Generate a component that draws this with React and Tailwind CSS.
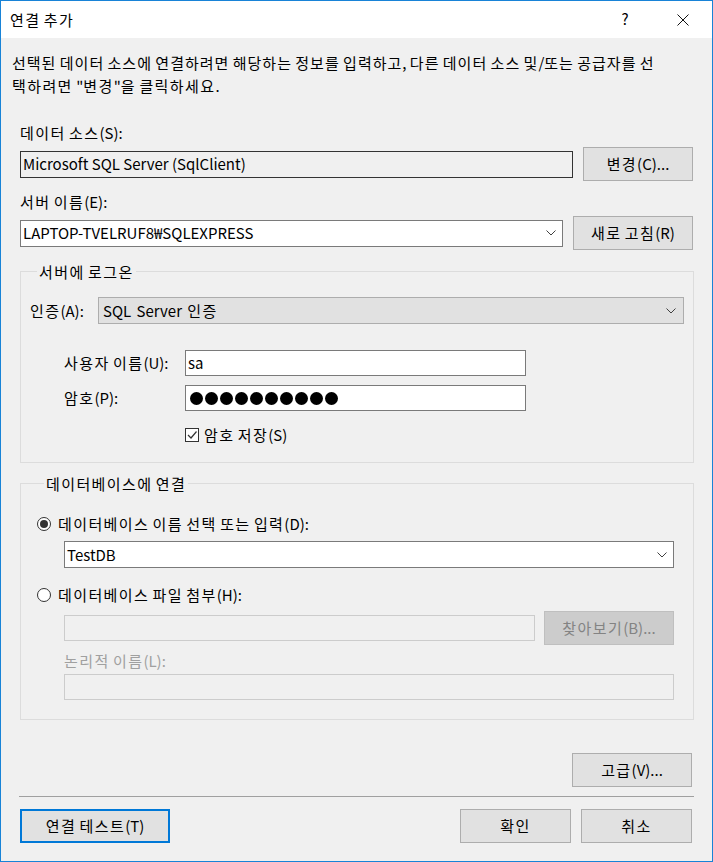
import React from "react";

// Widen Hangul runs slightly so they match the reference font's advance widths.
function T({ children, wide = "tracking-[1.4px]" }) {
  const parts = String(children).split(/([\uAC00-\uD7A3]+)/);
  return (
    <span>
      {parts.map((p, i) =>
        /[\uAC00-\uD7A3]/.test(p) ? (
          <span key={i} className={wide}>
            {p}
          </span>
        ) : (
          <React.Fragment key={i}>{p}</React.Fragment>
        )
      )}
    </span>
  );
}

function Chevron({ color = "#404040" }) {
  return (
    <svg width="10" height="6" viewBox="0 0 10 6" className="shrink-0">
      <path d="M0.5 0.5 L5 5 L9.5 0.5" fill="none" stroke={color} strokeWidth="1" />
    </svg>
  );
}

function Btn({ children, className = "" }) {
  return (
    <div
      className={`flex items-center justify-center border border-[#adadad] bg-[#e1e1e1] text-black leading-[20px] ${className}`}
    >
      <T>{children}</T>
    </div>
  );
}

function Radio({ checked }) {
  return (
    <div className="w-[14px] h-[14px] rounded-full border border-[#333333] bg-white flex items-center justify-center shrink-0">
      {checked && <div className="w-[8px] h-[8px] rounded-full bg-[#333333]" />}
    </div>
  );
}

export default function App() {
  return (
    <div className="w-[713px] h-[862px] border border-[#1883d7] bg-[#f0f0f0] font-['Noto_Sans_CJK_KR',sans-serif] text-[15px] text-black flex flex-col overflow-hidden">
      {/* Title bar */}
      <div className="h-[37px] shrink-0 bg-white flex items-center pl-[9px]">
        <span className="leading-[20px]">
          <T>연결 추가</T>
        </span>
        <div className="ml-auto flex items-center h-full">
          <div className="w-[58px] h-full flex items-center justify-center text-[15px]">?</div>
          <div className="w-[58px] h-full flex items-center justify-center">
            <svg width="12" height="12" viewBox="0 0 12 12">
              <path d="M0.5 0.5 L11.5 11.5 M11.5 0.5 L0.5 11.5" stroke="#111" strokeWidth="1" />
            </svg>
          </div>
        </div>
      </div>

      {/* Body */}
      <div className="flex flex-col px-[19px]">
        <p className="mt-[13px] -ml-[8px] leading-[23px] whitespace-nowrap">
          <T wide="tracking-[1px]">선택된 데이터 소스에 연결하려면 해당하는 정보를 입력하고, 다른 데이터 소스 및/또는 공급자를 선</T>
          <br />
          <T>택하려면 "변경"을 클릭하세요.</T>
        </p>

        <div className="mt-[24px] h-[23px] leading-[23px]">
          <T>데이터 소스(S):</T>
        </div>
        <div className="mt-[3px] h-[34px] flex items-center gap-[10px]">
          <div className="w-[553px] h-[27px] border border-[#333333] bg-[#f0f0f0] flex items-center pl-[2px] leading-[20px]">
            Microsoft SQL Server (SqlClient)
          </div>
          <Btn className="w-[110px] h-[34px]">변경(C)...</Btn>
        </div>

        <div className="mt-[9px] h-[23px] leading-[23px]">
          <T>서버 이름(E):</T>
        </div>
        <div className="mt-[3px] h-[34px] flex items-center gap-[10px]">
          <div className="w-[543px] h-[27px] border border-[#7a7a7a] bg-white flex items-center pl-[2px] pr-[6px] leading-[20px]">
            <span>LAPTOP-TVELRUF8₩SQLEXPRESS</span>
            <span className="ml-auto">
              <Chevron />
            </span>
          </div>
          <Btn className="w-[120px] h-[34px]">새로 고침(R)</Btn>
        </div>

        {/* Group 1 */}
        <fieldset className="mt-[10px] w-[674px] border border-[#dcdcdc] pl-[9px] pr-[9px] pb-[17px]">
          <legend className="ml-[7px] px-[2px] h-[23px] leading-[23px]">
            <T>서버에 로그온</T>
          </legend>
          <div className="mt-[14px] h-[27px] flex items-center">
            <span className="w-[68px] leading-[20px]">
              <T>인증(A):</T>
            </span>
            <div className="flex-1 h-[27px] border border-[#adadad] bg-[#e1e1e1] flex items-center pl-[4px] pr-[7px] leading-[20px]">
              <span className="[word-spacing:2px]">
                <T>SQL Server 인증</T>
              </span>
              <span className="ml-auto">
                <Chevron />
              </span>
            </div>
          </div>
          <div className="mt-[26px] h-[26px] flex items-center">
            <span className="ml-[34px] w-[121px] leading-[20px]">
              <T>사용자 이름(U):</T>
            </span>
            <div className="w-[341px] h-[26px] border border-[#7a7a7a] bg-white flex items-center pl-[2px] leading-[20px]">
              sa
            </div>
          </div>
          <div className="mt-[9px] h-[26px] flex items-center">
            <span className="ml-[34px] w-[121px] leading-[20px]">
              <T>암호(P):</T>
            </span>
            <div className="w-[341px] h-[26px] border border-[#7a7a7a] bg-white flex items-center pl-[4px] gap-[2px]">
              {Array.from({ length: 10 }).map((_, i) => (
                <div key={i} className="w-[13px] h-[13px] rounded-full bg-black" />
              ))}
            </div>
          </div>
          <div className="mt-[14px] h-[20px] flex items-center pl-[155px]">
            <div className="w-[14px] h-[14px] border border-[#333333] bg-white flex items-center justify-center shrink-0">
              <svg width="12" height="12" viewBox="0 0 12 12">
                <path d="M2 6 L5 9 L10.5 2.5" fill="none" stroke="#333" strokeWidth="1.2" />
              </svg>
            </div>
            <span className="ml-[5px] leading-[20px]">
              <T>암호 저장(S)</T>
            </span>
          </div>
        </fieldset>

        {/* Group 2 */}
        <fieldset className="mt-[9px] w-[674px] border border-[#dcdcdc] pl-[16px] pr-[19px] pb-[19px]">
          <legend className="ml-[7px] px-[2px] h-[23px] leading-[23px]">
            <T>데이터베이스에 연결</T>
          </legend>
          <div className="mt-[19px] h-[20px] flex items-center">
            <Radio checked />
            <span className="ml-[7px] leading-[20px]">
              <T>데이터베이스 이름 선택 또는 입력(D):</T>
            </span>
          </div>
          <div className="mt-[7px] ml-[27px] h-[27px] border border-[#7a7a7a] bg-white flex items-center pl-[2px] pr-[6px] leading-[20px]">
            <span>TestDB</span>
            <span className="ml-auto">
              <Chevron />
            </span>
          </div>
          <div className="mt-[17px] h-[20px] flex items-center">
            <Radio />
            <span className="ml-[7px] leading-[20px]">
              <T>데이터베이스 파일 첨부(H):</T>
            </span>
          </div>
          <div className="mt-[6px] ml-[27px] h-[34px] flex items-center gap-[9px]">
            <div className="w-[471px] h-[26px] border border-[#cccccc] bg-[#f0f0f0]" />
            <div className="w-[130px] h-[34px] border border-[#bfbfbf] bg-[#cccccc] text-[#838383] flex items-center justify-center leading-[20px]">
              <T>찾아보기(B)...</T>
            </div>
          </div>
          <div className="mt-[5px] ml-[27px] h-[22px] leading-[22px] text-[#a0a0a0]">
            <T>논리적 이름(L):</T>
          </div>
          <div className="mt-[2px] ml-[27px] h-[26px] border border-[#cccccc] bg-[#f0f0f0]" />
        </fieldset>

        <div className="mt-[33px] flex justify-end pr-[1px]">
          <Btn className="w-[120px] h-[34px]">고급(V)...</Btn>
        </div>

        <div className="mt-[9px] -ml-[1px] w-[675px] h-[1px] bg-[#a0a0a0]" />

        <div className="mt-[12px] flex items-center pr-[1px]">
          <div className="w-[150px] h-[34px] border-2 border-[#0078d7] bg-[#e1e1e1] flex items-center justify-center leading-[20px]">
            <T>연결 테스트(T)</T>
          </div>
          <Btn className="ml-auto w-[111px] h-[34px]">확인</Btn>
          <Btn className="ml-[10px] w-[111px] h-[34px]">취소</Btn>
        </div>
      </div>
    </div>
  );
}
